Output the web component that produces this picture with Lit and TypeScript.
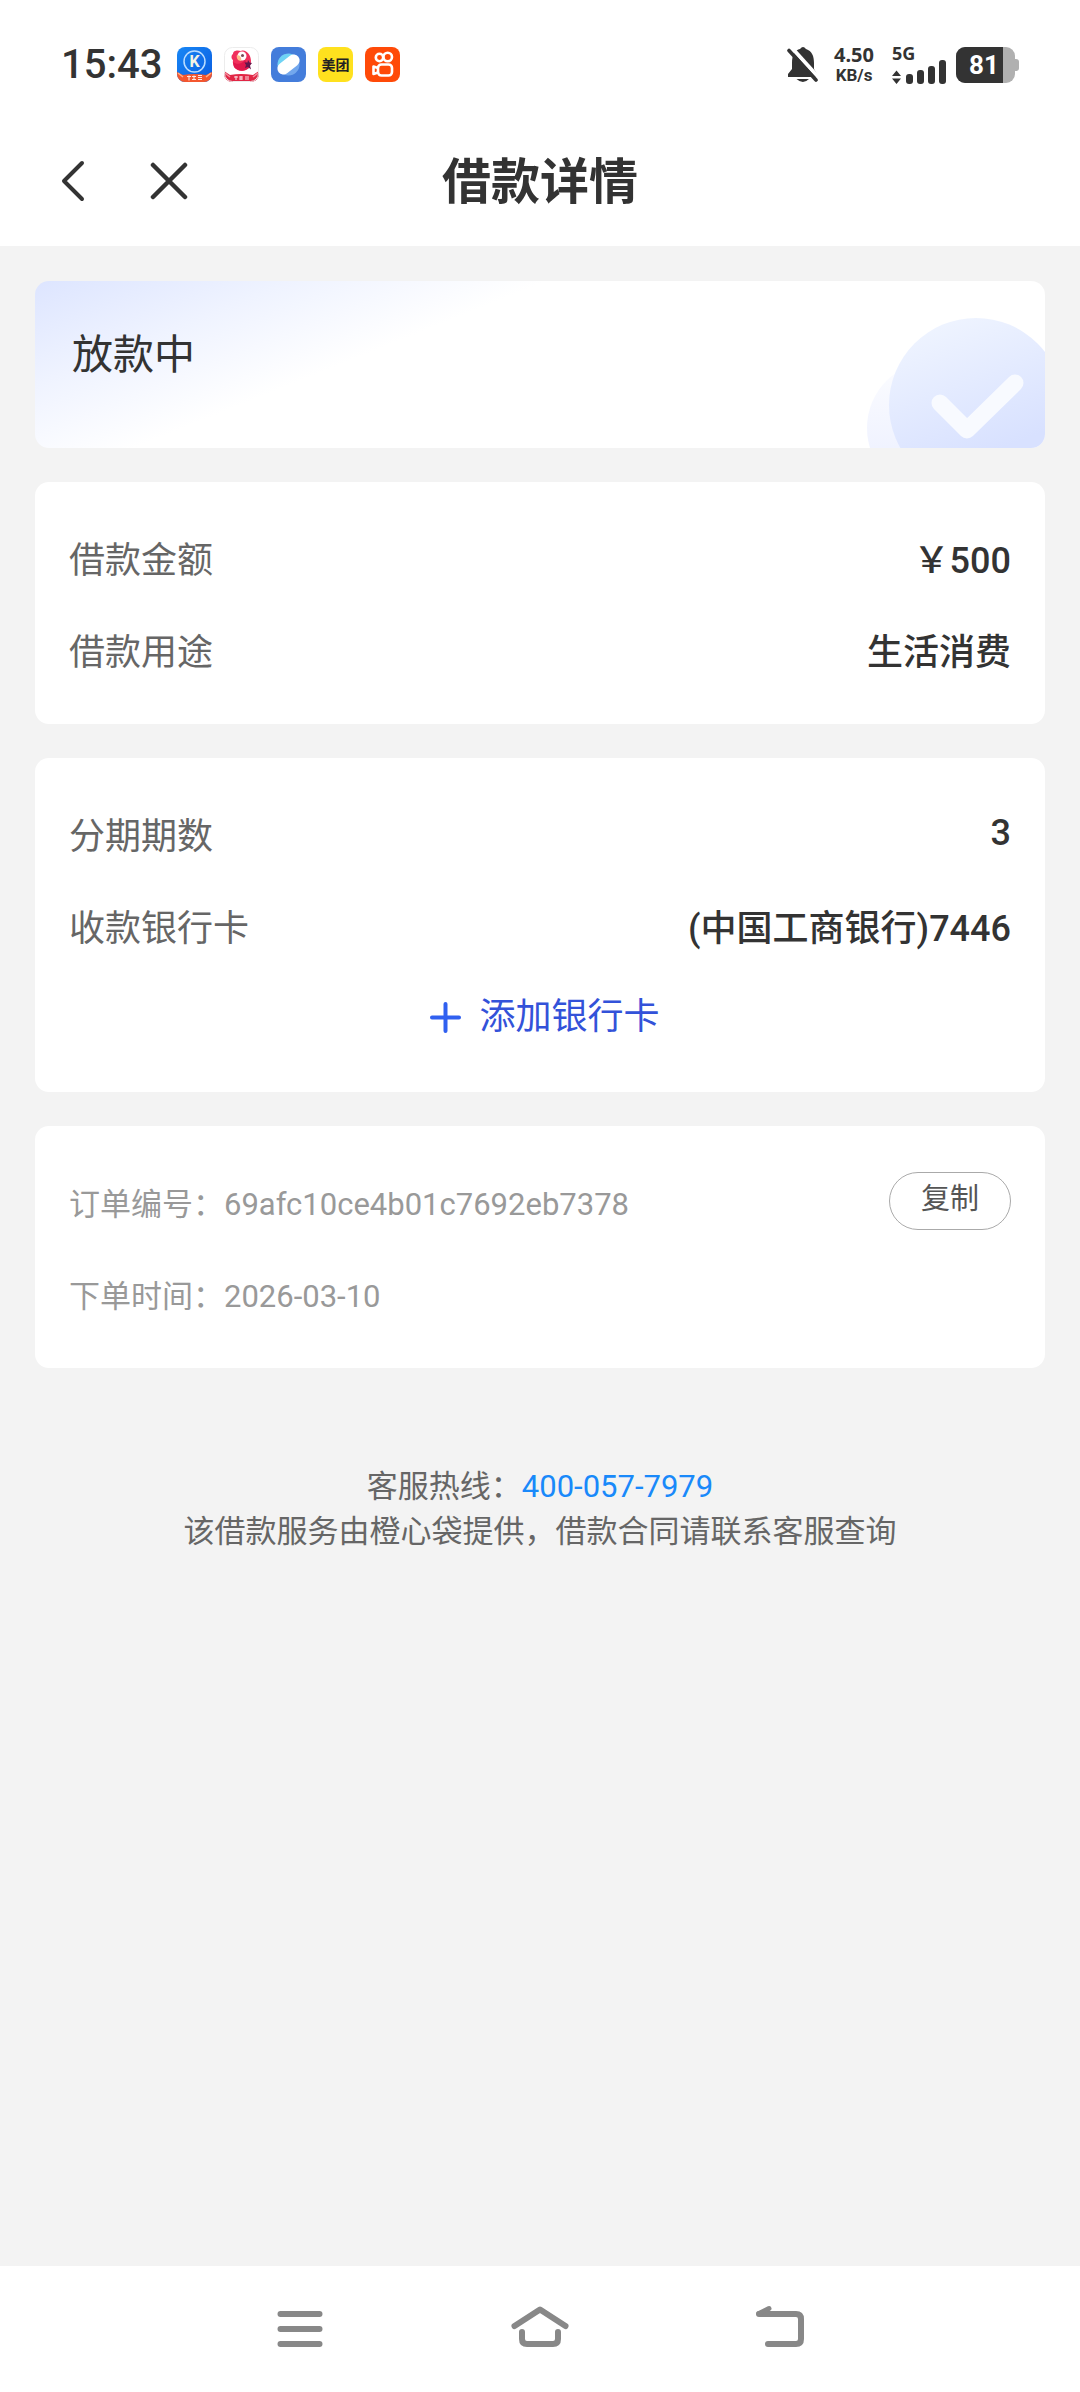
import { LitElement, html, css } from "lit";
import { customElement, property } from "lit/decorators.js";

@customElement("status-bar")
class StatusBar extends LitElement {
  static styles = css`
    :host {
      display: flex;
      align-items: center;
      justify-content: space-between;
      box-sizing: border-box;
      height: 116px;
      padding: 13px 61px 0 61px;
      color: #333;
      background: #fff;
    }
    .side {
      display: flex;
      align-items: center;
    }
    .time {
      margin-right: 15px;
      font-size: 40px;
      font-weight: 500;
      line-height: 40px;
    }
    .apps {
      display: flex;
      gap: 12px;
    }
    svg {
      display: block;
    }
    .meituan {
      font: 700 14px "Noto Sans CJK SC", sans-serif;
    }
    .letter {
      font: 700 16px Roboto, sans-serif;
    }
    .speed {
      display: flex;
      flex-direction: column;
      align-items: center;
      margin: 0 18px 0 15px;
      font-weight: 700;
    }
    .rate {
      font-family: "Noto Sans", sans-serif;
      font-size: 20px;
      line-height: 20px;
    }
    .unit {
      font-size: 17px;
      line-height: 20px;
    }
    .signal {
      display: flex;
      flex-direction: column;
      margin-right: 10px;
    }
    .network {
      font-family: "Noto Sans", sans-serif;
      font-size: 18px;
      font-weight: 700;
      line-height: 14px;
    }
    .level {
      font: 700 26px Roboto, sans-serif;
    }
  `;

  render() {
    return html`
      <div class="side">
        <span class="time">15:43</span>
        <div class="apps">
          <svg width="35" height="35" viewBox="0 0 35 35" aria-hidden="true">
            <defs>
              <clipPath id="k"><rect width="35" height="35" rx="8" /></clipPath>
              <linearGradient id="kb" x1="0" y1="0" x2="1" y2="1">
                <stop offset="0" stop-color="#1887f5" /><stop offset="1" stop-color="#0a5ce0" />
              </linearGradient>
            </defs>
            <g clip-path="url(#k)">
              <rect width="35" height="35" fill="url(#kb)" />
              <circle cx="17.500" cy="14.500" r="10.500" fill="none" stroke="#b9dcff" stroke-width="1.500" />
              <text class="letter" x="17.500" y="20" text-anchor="middle" fill="#f4f4e4">K</text>
              <path d="M0 25L6 28Q17 26 29 28L35 25V31L30 35H5L0 31Z" fill="#f4572f" />
              <path d="M1 26L6 30M34 26L29 30" stroke="#ffb084" stroke-width="1.500" />
              <path d="M10 29.500h4m-2-1v5m3-4h4m-4 3h4m-2-4v4m4-4h4m-4 2h4m-4 2h4" stroke="#fff" stroke-width="1.100" fill="none" opacity=".85" />
            </g>
          </svg>
          <svg width="35" height="35" viewBox="0 0 35 35" aria-hidden="true">
            <defs><clipPath id="p"><rect width="35" height="35" rx="8" /></clipPath></defs>
            <g clip-path="url(#p)">
              <rect width="35" height="35" fill="#fff" />
              <path d="M9 7C9 3 14 3 17 4C22 2 27 8 27 14C27 20 23 24 18 24C11 24 8 18 9 13C7 12 7 8 9 7Z" fill="#f0305c" />
              <path d="M9 15C13 18 18 17 21 13L26 20C22 25 13 24 10 20Z" fill="#e0184c" />
              <circle cx="18" cy="9" r="4.500" fill="#fff" />
              <circle cx="18.500" cy="8.500" r="1.500" fill="#7a4a58" />
              <path d="M13 8C16 8 18 11 17 14C14 14 12 11 13 8Z" fill="#ffbd8b" />
              <path d="M24 13l1.500 2.500 2.500 .5-2 2.500 1 4-3-2.500-3 1 1-3-1.500-2.500h3z" fill="#64164c" />
              <path d="M0 24L6 28Q17 26 29 28L35 24V31L30 35H5L0 31Z" fill="#e12645" />
              <path d="M1 26L6 30M34 26L29 30" stroke="#f58b9c" stroke-width="1.500" />
              <path d="M10 30h4m-2-1v4m3-3h4m-4 2h4m-2-3v4m4-3h4m-4 2h4" stroke="#fff" stroke-width="1.100" fill="none" opacity=".85" />
            </g>
            <rect x=".5" y=".5" width="34" height="34" rx="8" fill="none" stroke="#ececec" />
          </svg>
          <svg width="35" height="35" viewBox="0 0 35 35" aria-hidden="true">
            <rect width="35" height="35" rx="8" fill="#447ddb" />
            <circle cx="17.500" cy="17.500" r="11" fill="#72a7ed" />
            <path d="M7 20C5 12 12 5 20 7L25 9Z" fill="#6fd3f4" />
            <g transform="rotate(-38 17.500 17.500)">
              <rect x="5" y="11.500" width="25" height="12" rx="6" fill="#fff" />
            </g>
          </svg>
          <svg width="35" height="35" viewBox="0 0 35 35" aria-label="美团">
            <rect width="35" height="35" rx="8" fill="#ffe11e" />
            <text class="meituan" x="17.500" y="23" text-anchor="middle" fill="#222">美团</text>
          </svg>
          <svg width="35" height="35" viewBox="0 0 35 35" aria-hidden="true">
            <rect width="35" height="35" rx="8" fill="#ff4a08" />
            <g fill="none" stroke="#fff" stroke-width="2.600">
              <circle cx="14.500" cy="10.500" r="3.700" /><circle cx="22.700" cy="10" r="4.300" />
              <rect x="13" y="17.500" width="14" height="11" rx="3.500" />
              <path d="M13 21L8.500 19.500V27L13 25.500" stroke-linejoin="round" />
            </g>
          </svg>
        </div>
      </div>
      <div class="side">
        <svg width="32" height="37" viewBox="0 0 32 37" aria-label="静音">
          <path d="M5 17C5 9 8 4 13 3Q16 -1 19 3C25 5 27 10 27 17V23L30 28V31H1V28L5 23Z" fill="#333" />
          <path d="M9.500 33H22Q16 39 9.500 33Z" fill="#333" />
          <path d="M4 1L33 33" stroke="#fff" stroke-width="4" />
          <path d="M2 4.500L29 34" stroke="#333" stroke-width="3.600" stroke-linecap="round" />
        </svg>
        <div class="speed"><span class="rate">4.50</span><span class="unit">KB/s</span></div>
        <div class="signal">
          <span class="network">5G</span>
          <svg width="54" height="24" viewBox="0 0 54 24" aria-hidden="true">
            <g fill="#333">
              <path d="M0 16L4.500 10.500L9 16ZM0 18.500H9L4.500 24Z" />
              <rect x="14" y="14" width="7" height="10" rx="3" />
              <rect x="25" y="10" width="7" height="14" rx="3" />
              <rect x="36" y="6" width="7" height="18" rx="3" />
              <rect x="47" y="0" width="7" height="24" rx="3" />
            </g>
          </svg>
        </div>
        <svg width="63" height="36" viewBox="0 0 63 36" aria-label="81">
          <defs><clipPath id="b"><rect width="59" height="36" rx="9" /></clipPath></defs>
          <rect x="54" y="12" width="9" height="12" rx="3" fill="#b0b0b0" />
          <g clip-path="url(#b)">
            <rect width="59" height="36" fill="#b0b0b0" /><rect width="47" height="36" fill="#333" />
          </g>
          <text class="level" x="28" y="27" text-anchor="middle" fill="#fff">81</text>
        </svg>
      </div>
    `;
  }
}

@customElement("info-row")
class InfoRow extends LitElement {
  @property() label = "";
  @property() value = "";

  static styles = css`
    :host {
      display: flex;
      align-items: center;
      justify-content: space-between;
      height: 92px;
      font-size: 36px;
    }
    .label {
      color: #666;
    }
    .value {
      color: #333;
      font-weight: 500;
    }
  `;

  render() {
    return html`<span class="label">${this.label}</span><span class="value">${this.value}</span>`;
  }
}

@customElement("app-root")
class AppRoot extends LitElement {
  static styles = css`
    :host {
      display: flex;
      flex-direction: column;
      min-height: 100vh;
      background: #f3f3f3;
      color: #333;
      font-family: Roboto, "Noto Sans CJK SC", sans-serif;
    }
    button {
      padding: 0;
      border: 0;
      background: none;
      color: inherit;
      font: inherit;
      cursor: pointer;
    }
    svg {
      display: block;
    }
    .header {
      display: grid;
      grid-template-columns: 1fr auto 1fr;
      align-items: center;
      height: 130px;
      padding: 0 60px;
      background: #fff;
    }
    .tools {
      display: flex;
      align-items: center;
      gap: 62px;
    }
    .title {
      margin: 0;
      padding-top: 4px;
      font-size: 49px;
      font-weight: 700;
      line-height: 60px;
    }
    .content {
      display: flex;
      flex: 1;
      flex-direction: column;
      gap: 34px;
      padding: 35px 35px 0;
    }
    .card {
      padding: 29px 34px;
      border-radius: 14px;
      background: #fff;
    }
    .status {
      position: relative;
      overflow: hidden;
      box-sizing: border-box;
      height: 167px;
      padding: 44px 37px;
      background: linear-gradient(158deg, #dde5ff 0%, #eff3ff 18%, #fff 36%);
    }
    .state {
      margin: 0;
      font-size: 41px;
      font-weight: 400;
      line-height: 60px;
    }
    .badge {
      position: absolute;
      right: 0;
      bottom: 0;
    }
    .add {
      display: flex;
      align-items: center;
      justify-content: center;
      gap: 18px;
      width: 100%;
      height: 92px;
      padding-left: 10px;
      color: #3352d9;
      font-size: 36px;
    }
    .add-text {
      padding-bottom: 8px;
    }
    .order {
      display: flex;
      align-items: center;
      justify-content: space-between;
      height: 92px;
      color: #999;
      font-size: 31px;
    }
    .copy {
      width: 122px;
      height: 58px;
      padding-bottom: 10px;
      border: 1px solid #aaa;
      border-radius: 29px;
      color: #555;
      font-size: 29px;
    }
    .service {
      margin-top: 62px;
      color: #666;
      font-size: 31px;
      line-height: 45px;
      text-align: center;
    }
    .service p {
      margin: 0;
    }
    .phone {
      color: #1989fa;
      text-decoration: none;
    }
    .nav {
      display: flex;
      align-items: center;
      justify-content: center;
      gap: 180px;
      height: 126px;
      background: #fff;
    }
  `;

  render() {
    return html`
      <status-bar></status-bar>
      <header class="header">
        <div class="tools">
          <button aria-label="返回">
            <svg width="28" height="44" viewBox="0 0 28 44">
              <path d="M22 4L4 22L22 40" fill="none" stroke="#333" stroke-width="4" stroke-linecap="round" stroke-linejoin="round" />
            </svg>
          </button>
          <button aria-label="关闭">
            <svg width="38" height="38" viewBox="0 0 38 38">
              <path d="M3 3L35 35M35 3L3 35" stroke="#333" stroke-width="4.500" stroke-linecap="round" />
            </svg>
          </button>
        </div>
        <h1 class="title">借款详情</h1>
      </header>
      <main class="content">
        <section class="card status">
          <h2 class="state">放款中</h2>
          <svg class="badge" width="180" height="135" viewBox="0 0 180 135" aria-hidden="true">
            <defs>
              <linearGradient id="disc" x1=".2" y1="0" x2=".6" y2="1">
                <stop offset="0" stop-color="#f0f5ff" /><stop offset=".8" stop-color="#d8e1ff" />
              </linearGradient>
              <linearGradient id="halo" x1="0" y1="0" x2="0" y2="1">
                <stop offset=".1" stop-color="#fafbff" /><stop offset=".7" stop-color="#eff2ff" />
              </linearGradient>
            </defs>
            <circle cx="69" cy="115" r="67" fill="url(#halo)" />
            <circle cx="111" cy="92" r="87" fill="url(#disc)" />
            <path d="M75 90L102 117L150 70" fill="none" stroke="#f8faff" stroke-width="17" stroke-linecap="round" stroke-linejoin="round" />
          </svg>
        </section>
        <section class="card">
          <info-row label="借款金额" value="￥500"></info-row>
          <info-row label="借款用途" value="生活消费"></info-row>
        </section>
        <section class="card">
          <info-row label="分期期数" value="3"></info-row>
          <info-row label="收款银行卡" value="(中国工商银行)7446"></info-row>
          <button class="add">
            <svg width="31" height="31" viewBox="0 0 31 31" aria-hidden="true">
              <path d="M2 15.500H29M15.500 2V29" stroke="#3060f0" stroke-width="4" stroke-linecap="round" />
            </svg>
            <span class="add-text">添加银行卡</span>
          </button>
        </section>
        <section class="card">
          <div class="order">
            <span>订单编号：69afc10ce4b01c7692eb7378</span>
            <button class="copy">复制</button>
          </div>
          <div class="order"><span>下单时间：2026-03-10</span></div>
        </section>
        <footer class="service">
          <p>客服热线：<a class="phone" href="tel:400-057-7979">400-057-7979</a></p>
          <p>该借款服务由橙心袋提供，借款合同请联系客服查询</p>
        </footer>
      </main>
      <nav class="nav">
        <button aria-label="最近任务">
          <svg width="60" height="48" viewBox="0 0 60 48">
            <path d="M10.500 9H49.500M10.500 24H49.500M10.500 39H49.500" stroke="#888" stroke-width="6" stroke-linecap="round" />
          </svg>
        </button>
        <button aria-label="主屏幕">
          <svg width="60" height="48" viewBox="0 0 60 48">
            <g fill="none" stroke="#888" stroke-width="6" stroke-linecap="round" stroke-linejoin="round">
              <path d="M4.500 21L30 4.500L55.500 21" />
              <path d="M12 27V34Q12 39 17 39H43Q48 39 48 34V27" />
            </g>
          </svg>
        </button>
        <button aria-label="后退">
          <svg width="60" height="48" viewBox="0 0 60 48">
            <g fill="none" stroke="#888" stroke-width="6" stroke-linecap="round" stroke-linejoin="round">
              <path d="M9 9H46Q51 9 51 14V34Q51 39 46 39H18" />
              <path d="M9 8.500L19 3.500" stroke-width="5" />
            </g>
          </svg>
        </button>
      </nav>
    `;
  }
}
